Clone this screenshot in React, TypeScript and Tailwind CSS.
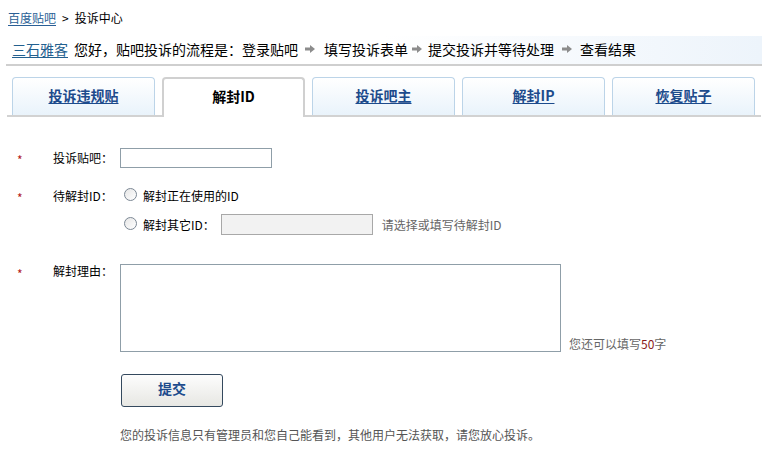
import React from "react";

const Arrow = () => (
  <svg width="10" height="8" viewBox="0 0 10 8" className="shrink-0">
    <path d="M0 2.5h5V0l5 4-5 4V5.5H0z" fill="#8c8c8c" />
  </svg>
);

const Radio = () => (
  <span className="inline-block w-[13px] h-[13px] rounded-full border border-[#7b8794] bg-gradient-to-br from-[#e6e6e6] to-white shrink-0" />
);

const tabs = ["投诉违规贴", "解封ID", "投诉吧主", "解封IP", "恢复贴子"];

export default function App() {
  return (
    <div className="w-[768px] h-[458px] bg-white text-[12px] text-black font-['Noto_Sans_CJK_SC',sans-serif] overflow-hidden">
      {/* breadcrumb */}
      <div className="mt-[11px] h-[14px] leading-[14px] pl-[8px] flex items-center">
        <a className="text-[#2a5f96] underline underline-offset-2">百度贴吧</a>
        <span className="ml-[6px]">&gt;</span>
        <span className="ml-[6px]">投诉中心</span>
      </div>

      {/* header line */}
      <div className="mt-[11px] mx-[6px] h-[30px] pb-[2px] pl-[6px] border-b-2 border-[#cfcfcf] bg-gradient-to-r from-white via-white to-[#edf4fb] text-[14px] leading-[20px] flex items-center">
        <a className="text-[#23608f] underline underline-offset-2">三石雅客</a>
        <span className="ml-[6px]">您好，贴吧投诉的流程是：登录贴吧</span>
        <span className="ml-[7px]"><Arrow /></span>
        <span className="ml-[9px]">填写投诉表单</span>
        <span className="ml-[4px]"><Arrow /></span>
        <span className="ml-[6px]">提交投诉并等待处理</span>
        <span className="ml-[8px]"><Arrow /></span>
        <span className="ml-[8px]">查看结果</span>
      </div>

      {/* tabs */}
      <div className="mt-[11px] mx-[7px] pl-[5px] flex gap-[7px] border-b-2 border-[#d2d2d2] h-[40px]">
        {tabs.map((t, i) =>
          i === 1 ? (
            <div
              key={t}
              className="w-[143px] h-[40px] -mb-[2px] pb-[3px] rounded-t-[4px] border-2 border-b-0 border-[#d0d0d0] bg-white flex items-center justify-center font-bold text-[14px] text-black"
            >
              {t}
            </div>
          ) : (
            <div
              key={t}
              className="w-[143px] h-[38px] pb-[2px] rounded-t-[4px] border border-b-0 border-[#bcd4e8] bg-gradient-to-b from-white to-[#e9f3fb] flex items-center justify-center"
            >
              <a className="font-bold text-[14px] text-[#1d4b8c] underline underline-offset-2">{t}</a>
            </div>
          )
        )}
      </div>

      {/* form */}
      <div className="pl-[17px] mt-[31px]">
        {/* row 1 */}
        <div className="flex items-center h-[20px]">
          <span className="w-[36px] text-[#b32020] pt-[3px]">*</span>
          <span className="w-[67px]">投诉贴吧：</span>
          <div className="w-[152px] h-[20px] border border-[#8f9ea8] bg-white" />
        </div>

        {/* row 2 */}
        <div className="flex items-center h-[20px] mt-[18px]">
          <span className="w-[36px] text-[#b32020] pt-[3px]">*</span>
          <span className="w-[67px]">待解封ID：</span>
          <span className="ml-[4px]"><Radio /></span>
          <span className="ml-[6px]">解封正在使用的ID</span>
        </div>

        {/* row 3 */}
        <div className="flex items-center h-[21px] mt-[8px] pl-[103px]">
          <span className="ml-[4px]"><Radio /></span>
          <span className="ml-[6px]">解封其它ID：</span>
          <div className="ml-[6px] w-[152px] h-[21px] border border-[#a8a8a8] bg-[#f2f2f2]" />
          <span className="ml-[9px] text-[#666]">请选择或填写待解封ID</span>
        </div>

        {/* row 4 */}
        <div className="flex items-start mt-[29px]">
          <span className="w-[36px] text-[#b32020] leading-[14px] mt-[3px]">*</span>
          <span className="w-[67px] leading-[14px]">解封理由：</span>
          <div className="w-[441px] h-[88px] border border-[#8f9ea8] bg-white" />
          <span className="self-end ml-[8px] mb-[1px] text-[#666] leading-[14px]">
            您还可以填写<span className="text-[#8b1a1a]">50</span>字
          </span>
        </div>

        {/* button */}
        <div className="mt-[22px] pl-[104px]">
          <div className="w-[102px] h-[33px] rounded-[3px] border border-[#34495e] bg-gradient-to-b from-[#fdfdfd] to-[#e7e7e3] flex items-center justify-center pb-[4px] font-bold text-[14px] text-[#1d4b8c]">
            提交
          </div>
        </div>

        <div className="mt-[21px] pl-[103px] text-[#555] leading-[14px]">
          您的投诉信息只有管理员和您自己能看到，其他用户无法获取，请您放心投诉。
        </div>
      </div>
    </div>
  );
}
